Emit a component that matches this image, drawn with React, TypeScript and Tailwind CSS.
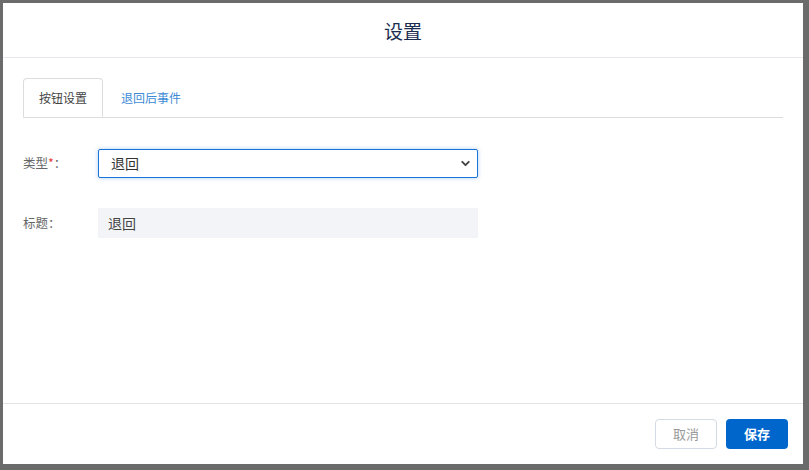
import { ChevronDown } from 'lucide-react';

const FONT = { fontFamily: '"Noto Sans CJK SC", "Noto Sans", sans-serif' };

export default function App() {
  return (
    <div className="h-[470px] w-[809px] bg-[#6b6b6b] pb-[6px] pl-[3px] pr-[6px] pt-[3px]" style={FONT}>
      <div className="flex h-full flex-col bg-white">
        <div className="flex h-[55px] items-center justify-center border-b border-[#e6e8f0] pt-[2px]">
          <h1 className="text-[19px] text-[#1b2d4f]">设置</h1>
        </div>

        <div className="flex-1 px-[20px] pt-[20px]">
          <div className="flex border-b border-[#dcdcdc]">
            <div className="-mb-px flex h-[39px] w-[80px] items-center justify-center rounded-t border border-b-white border-[#dcdcdc] bg-white text-[12px] text-[#444]">
              按钮设置
            </div>
            <div className="flex h-[39px] items-center px-[18px] text-[12px] text-[#3d8ad6]">退回后事件</div>
          </div>

          <div className="mt-[31px] flex items-center">
            <label className="w-[75px] text-[12.5px] text-[#666]">
              类型<span className="text-[#e53935]">*</span>：
            </label>
            <div className="relative flex h-[29px] w-[380px] items-center rounded-[2px] border border-[#1a73d9] bg-white pl-[12px] shadow-[0_0_4px_rgba(26,115,217,0.35)]">
              <span className="text-[14px] text-[#333]">退回</span>
              <ChevronDown size={13} strokeWidth={3.5} className="absolute right-[5px] text-[#444]" />
            </div>
          </div>

          <div className="mt-[30px] flex items-center">
            <label className="w-[75px] text-[12.5px] text-[#666]">标题：</label>
            <div className="flex h-[30px] w-[380px] items-center bg-[#f3f4f8] pl-[10px] text-[14px] text-[#444]">退回</div>
          </div>
        </div>

        <div className="flex h-[61px] items-center justify-end gap-[9px] border-t border-[#e4e4e4] pr-[15px]">
          <button className="h-[30px] w-[62px] rounded border border-[#d5d9e3] bg-white text-[13px] text-[#999]">取消</button>
          <button className="h-[30px] w-[62px] rounded bg-[#0066cc] text-[13px] font-bold text-white">保存</button>
        </div>
      </div>
    </div>
  );
}
